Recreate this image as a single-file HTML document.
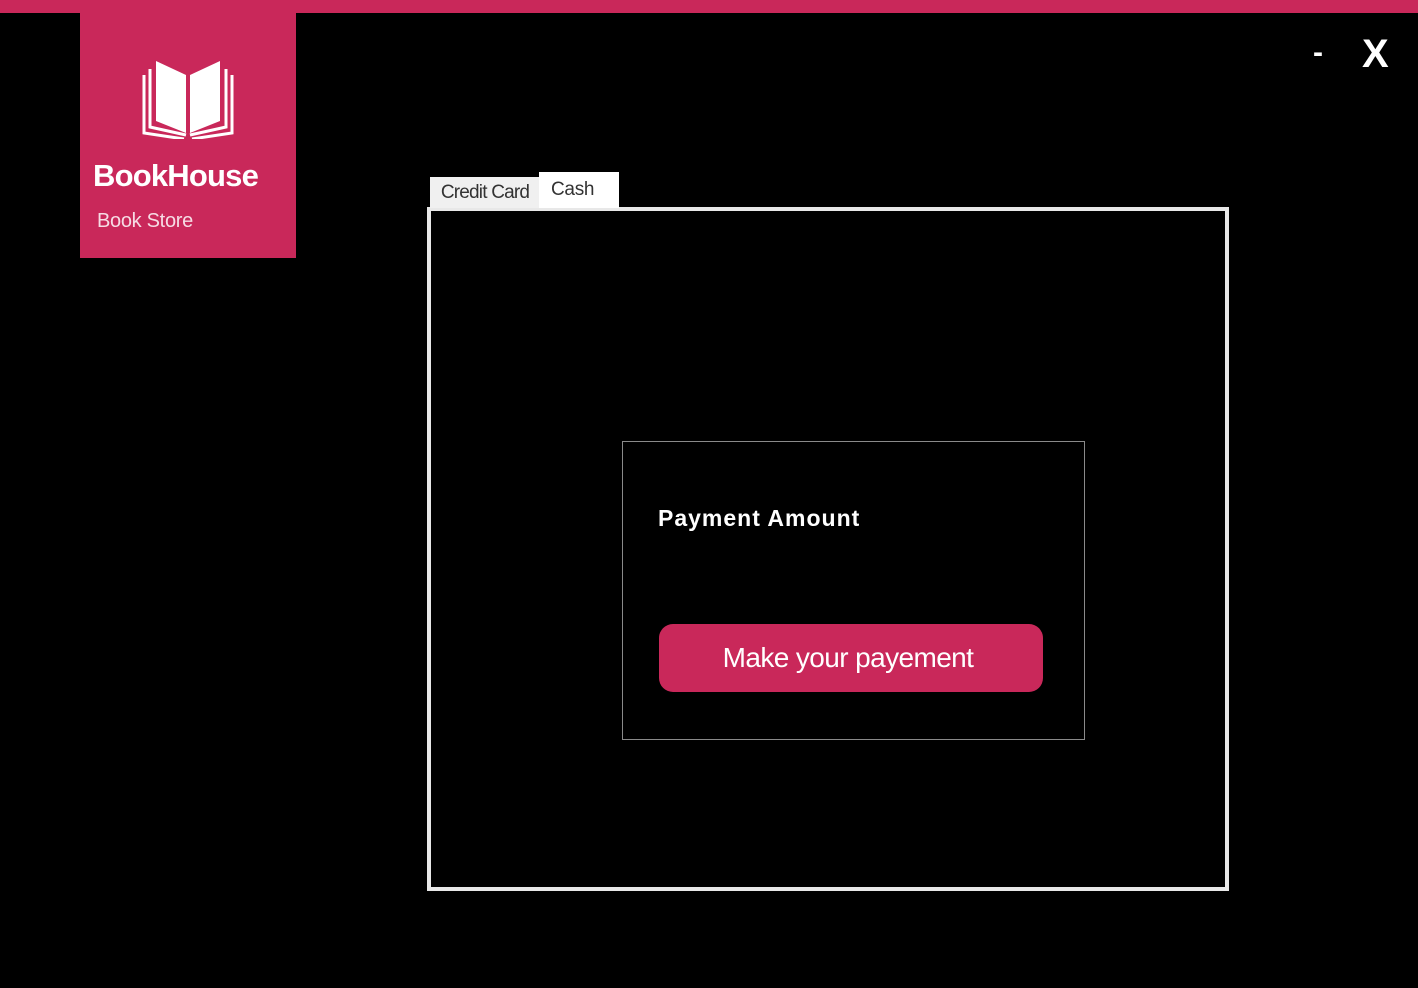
<!DOCTYPE html>
<html><head><meta charset="utf-8"><style>
html,body{margin:0;padding:0;background:#000;width:1418px;height:988px;overflow:hidden;font-family:"Liberation Sans",sans-serif}
.top{position:absolute;left:0;top:0;width:1418px;height:13px;background:#c9285a}
.logo{position:absolute;left:80px;top:13px;width:216px;height:245px;background:#c9285a}
.t1{position:absolute;left:13px;top:145px;color:#fff;font-weight:bold;font-size:31px;letter-spacing:-0.8px}
.t2{position:absolute;left:17px;top:197px;color:#f6dbe4;font-size:20px;letter-spacing:-0.3px}
.min{position:absolute;left:1313px;top:36px;color:#fff;font-size:30px;font-weight:bold}
.x{position:absolute;left:1362px;top:32px;color:#fff;font-size:40px;font-weight:bold}
.tab1{position:absolute;left:430px;top:177px;width:110px;height:31px;background:#f0f0f0;color:#333;font-size:19px;line-height:31px;text-align:center;letter-spacing:-0.8px}
.tab2{position:absolute;left:539px;top:172px;width:80px;height:36px;background:#fff;color:#333;font-size:19px;line-height:36px;box-sizing:border-box;padding-left:12px;letter-spacing:-0.3px}
.frame{position:absolute;left:427px;top:207px;width:802px;height:684px;border:4px solid #e8e8e8;box-sizing:border-box}
.inner{position:absolute;left:622px;top:441px;width:463px;height:299px;border:1px solid #8a8a8a;box-sizing:border-box}
.pa{position:absolute;left:658px;top:505px;color:#fff;font-weight:bold;font-size:23px;letter-spacing:1px}
.btn{position:absolute;left:659px;top:624px;width:384px;height:68px;background:#c9285a;border-radius:14px;color:#fff;font-size:28px;line-height:68px;text-align:center;letter-spacing:-0.6px;box-sizing:border-box;padding-right:6px}
</style></head><body>
<div class="top"></div>
<div class="logo">
<svg style="position:absolute;left:62px;top:42px" width="92" height="84" viewBox="0 0 92 84">
<path d="M14 6 L44 20 L44 78 L14 66 Z" fill="#fff"/>
<path d="M78 6 L48 20 L48 78 L78 66 Z" fill="#fff"/>
<path d="M8 14 L8 72 L44 80 M84 14 L84 72 L48 80" stroke="#fff" stroke-width="3" fill="none"/>
<path d="M2 20 L2 78 L42 84 M90 20 L90 78 L50 84" stroke="#fff" stroke-width="3" fill="none"/>
</svg>
<div class="t1">BookHouse</div>
<div class="t2">Book Store</div>
</div>
<div class="min">-</div>
<div class="x">X</div>
<div class="frame"></div>
<div class="tab1">Credit Card</div>
<div class="tab2">Cash</div>
<div class="inner"></div>
<div class="pa">Payment Amount</div>
<div class="btn">Make your payement</div>
</body></html>
